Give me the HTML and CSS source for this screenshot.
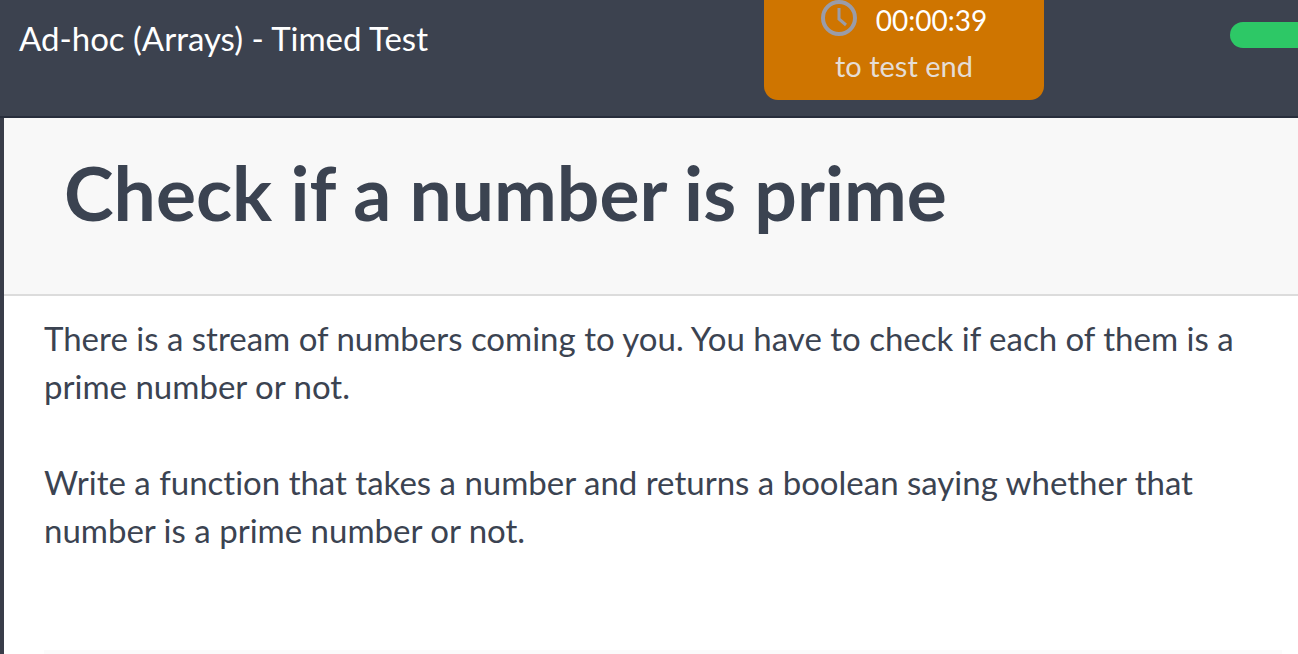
FILE: index.html
```
<!DOCTYPE html>
<html lang="en">
<head>
<meta charset="utf-8">
<title>Ad-hoc (Arrays) - Timed Test</title>
<link rel="stylesheet" href="styles.css">
</head>
<body>
<header class="topbar">
  <div class="test-name">Ad-hoc (Arrays) - Timed Test</div>
  <div class="timer">
    <div class="timer-row">
      <svg class="clock" viewBox="0 0 36 36" aria-hidden="true"><circle class="clock-face" cx="18" cy="18" r="16"/><path class="clock-hands" d="M18 8v11l7 6"/></svg>
      <span class="time">00:00:39</span>
    </div>
    <div class="timer-label">to test end</div>
  </div>
  <div class="progress"></div>
</header>
<main class="panel">
  <div class="title-block"><h1 class="title">Check if a number is prime</h1></div>
  <article class="description">
    <p>There is a stream of numbers coming to you. You have to check if each of them is a prime number or not.</p>
    <p>Write a function that takes a number and returns a boolean saying whether that number is a prime number or not.</p>
    <hr class="divider">
  </article>
</main>
</body>
</html>
```
FILE: styles.css
```
* { box-sizing: border-box; }
body {
  margin: 0;
  min-height: 100vh;
  display: flex;
  flex-direction: column;
  overflow: hidden;
  background: #393d49;
  color: #3b4351;
  font-family: Lato, sans-serif;
  font-variant-ligatures: none;
}
.topbar {
  display: grid;
  grid-template-columns: 1fr 280px 186px 68px;
  height: 118px;
  border-bottom: 2px solid #282e3c;
  background: #3c424f;
  color: #fff;
}
.test-name {
  padding: 18px 0 0 19px;
  font-size: 33px;
  line-height: 40px;
}
.timer {
  height: 100px;
  border-radius: 0 0 14px 14px;
  background: #cf7500;
  text-align: center;
}
.timer-row {
  display: flex;
  justify-content: center;
  gap: 19px;
  height: 44px;
}
.clock {
  width: 36px;
  height: 36px;
  fill: none;
  stroke: #9a9ca8;
}
.clock-face { stroke-width: 4; }
.clock-hands { stroke-width: 3; }
.time { font-size: 28px; line-height: 40px; }
.timer-label { font-size: 29px; line-height: 44px; color: #e5ddd5; }
.progress {
  grid-column: 4;
  height: 26px;
  margin-top: 22px;
  border-radius: 13px 0 0 13px;
  background: #2dc866;
}
.panel {
  flex: 1;
  margin-left: 4px;
  background: #fff;
}
.title-block {
  padding: 24px 60px 52px;
  background: #f8f8f8;
  border-bottom: 2px solid #dcdcdc;
}
.title {
  margin: 0;
  font-size: 75px;
  line-height: 100px;
  font-weight: 700;
}
.description {
  padding: 18px 16px 0 40px;
  font-size: 33px;
  line-height: 48px;
}
.description p { margin: 0 0 48px; }
.divider { margin: 96px 0 0; border: 0; border-top: 4px solid #fbfbfb; }
```
